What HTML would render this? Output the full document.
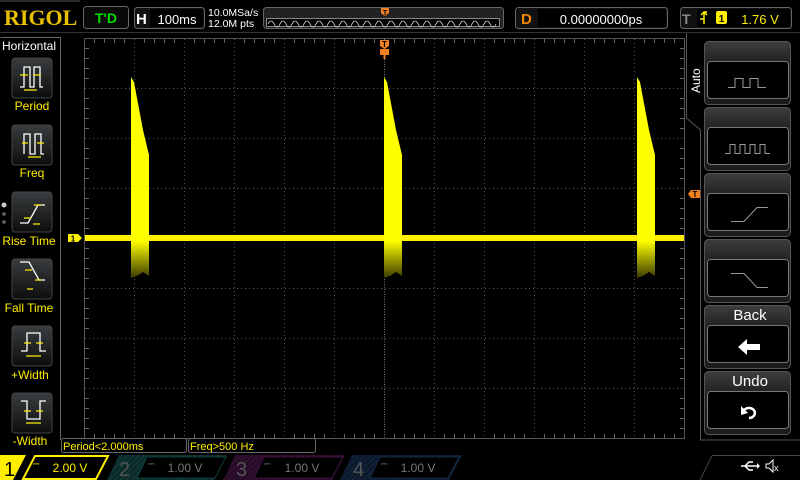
<!DOCTYPE html>
<html><head><style>
html,body{margin:0;padding:0;background:#000;width:800px;height:480px;overflow:hidden;font-family:"Liberation Sans",sans-serif}
svg text{font-family:"Liberation Sans",sans-serif}
</style></head><body>
<svg width="800" height="480" viewBox="0 0 800 480" xmlns="http://www.w3.org/2000/svg">
<defs>
<linearGradient id="btn" x1="0" y1="0" x2="0" y2="1"><stop offset="0" stop-color="#3a3d3f"/><stop offset="1" stop-color="#0c0d0e"/></linearGradient>
<linearGradient id="rb" x1="0" y1="0" x2="0" y2="1"><stop offset="0" stop-color="#3c3e40"/><stop offset="0.3" stop-color="#222425"/><stop offset="1" stop-color="#1a1b1c"/></linearGradient>
<linearGradient id="dn" x1="0" y1="0" x2="0" y2="1"><stop offset="0" stop-color="#ffff00"/><stop offset="1" stop-color="#3a3a00"/></linearGradient>
<pattern id="h2" width="4" height="4" patternUnits="userSpaceOnUse" patternTransform="rotate(45)"><rect width="4" height="4" fill="#0c2a28"/><line x1="0" y1="0" x2="0" y2="4" stroke="#134441" stroke-width="1.5"/></pattern>
<pattern id="h3" width="4" height="4" patternUnits="userSpaceOnUse" patternTransform="rotate(45)"><rect width="4" height="4" fill="#260c26"/><line x1="0" y1="0" x2="0" y2="4" stroke="#3d143d" stroke-width="1.5"/></pattern>
<pattern id="h4" width="4" height="4" patternUnits="userSpaceOnUse" patternTransform="rotate(45)"><rect width="4" height="4" fill="#0c1a2c"/><line x1="0" y1="0" x2="0" y2="4" stroke="#142a46" stroke-width="1.5"/></pattern>
</defs>
<!-- top bar -->
<line x1="0" y1="1" x2="80" y2="1" stroke="#555"/>
<text x="4" y="25" font-family="Liberation Serif" font-weight="bold" font-size="22" fill="#e8c000" style="font-family:'Liberation Serif',serif">RIGOL</text>
<rect x="83.5" y="6.5" width="45" height="22" rx="3" fill="#0a0a0a" stroke="#666"/>
<text x="106" y="23" font-size="14" font-weight="bold" fill="#00e000" text-anchor="middle">T'D</text>
<rect x="134.5" y="7.5" width="70" height="21" rx="3" fill="#111" stroke="#666"/>
<rect x="150" y="9" width="53" height="18" fill="#000"/>
<text x="136" y="24" font-size="15" font-weight="bold" fill="#fff">H</text>
<text x="177" y="24" font-size="13" fill="#fff" text-anchor="middle">100ms</text>
<text x="208" y="16" font-size="10.5" fill="#fff">10.0MSa/s</text>
<text x="208" y="27" font-size="10.5" fill="#fff">12.0M pts</text>
<rect x="263.5" y="7.5" width="240" height="21" rx="3" fill="#222" stroke="#666"/>
<rect x="266.5" y="18.5" width="233" height="8" fill="#000" stroke="#888"/>
<path d="M268 24 q3 -6 6 0 q3 6 6 0 q3 -6 6 0 q3 6 6 0 q3 -6 6 0 q3 6 6 0 q3 -6 6 0 q3 6 6 0 q3 -6 6 0 q3 6 6 0 q3 -6 6 0 q3 6 6 0 q3 -6 6 0 q3 6 6 0 q3 -6 6 0 q3 6 6 0 q3 -6 6 0 q3 6 6 0 q3 -6 6 0 q3 6 6 0 q3 -6 6 0 q3 6 6 0 q3 -6 6 0 q3 6 6 0 q3 -6 6 0 q3 6 6 0 q3 -6 6 0 q3 6 6 0 q3 -6 6 0 q3 6 6 0 q3 -6 6 0 q3 6 6 0 q3 -6 6 0 q3 6 6 0 q3 -6 6 0 q3 6 6 0 q3 -6 6 0 q3 6 6 0" fill="none" stroke="#ddd" stroke-width="0.8"/>
<path d="M381 8 h8 v5 l-4 3 l-4 -3z" fill="#f08020"/>
<text x="385" y="15" font-size="7" fill="#000" text-anchor="middle" font-weight="bold">T</text>
<rect x="515.5" y="7.5" width="152" height="21" rx="3" fill="#111" stroke="#666"/>
<rect x="538" y="9" width="128" height="18" fill="#000"/>
<text x="521" y="24" font-size="15" font-weight="bold" fill="#f08800">D</text>
<text x="601" y="24" font-size="13" fill="#fff" text-anchor="middle">0.00000000ps</text>
<rect x="680.5" y="7.5" width="111" height="21" rx="3" fill="#111" stroke="#666"/>
<rect x="697" y="9" width="93" height="18" fill="#000"/>
<text x="682" y="24" font-size="14" font-weight="bold" fill="#888">T</text>
<path d="M700 19 h4 v-7 h3 M704 19 v5 M701 15 l3 -3 l3 3" fill="none" stroke="#ffee00" stroke-width="1.5"/>
<rect x="716" y="11" width="11" height="13" rx="2" fill="#ffee00"/>
<text x="721.5" y="22" font-size="10" fill="#000" text-anchor="middle" font-weight="bold">1</text>
<text x="760" y="24" font-size="13" fill="#ffee00" text-anchor="middle">1.76 V</text>
<line x1="0" y1="32.5" x2="800" y2="32.5" stroke="#333"/>
<!-- left panel -->
<path d="M0.5 37.5 H60.5 V440" fill="none" stroke="#666"/>
<text x="2" y="50" font-size="12" fill="#fff">Horizontal</text>
<g>
<rect x="12" y="58" width="40" height="40" rx="3" fill="url(#btn)" stroke="#444"/>
<rect x="12" y="125" width="40" height="40" rx="3" fill="url(#btn)" stroke="#444"/>
<rect x="12" y="192" width="40" height="40" rx="3" fill="url(#btn)" stroke="#444"/>
<rect x="12" y="259" width="40" height="40" rx="3" fill="url(#btn)" stroke="#444"/>
<rect x="12" y="326" width="40" height="40" rx="3" fill="url(#btn)" stroke="#444"/>
<rect x="12" y="393" width="40" height="40" rx="3" fill="url(#btn)" stroke="#444"/>
</g>
<g fill="none" stroke-width="1.3">
<path d="M20 87 h4 v-20 h6 v20 h4 v-20 h6 v20 h3" stroke="#fff"/>
<path d="M20 75 h8 M33 75 h8 M24 90 h13" stroke="#ffee00"/>
<path d="M24 154 v-20 h6 v20 h5 v-20 h6 v20 h3" stroke="#fff"/>
<path d="M22 143 h6 M37 143 h7 M28 157 h13" stroke="#ffee00"/>
<path d="M20 223 h8 l10 -18 h7" stroke="#fff"/>
<path d="M34 205 h7 M24 218 h7 M33 224 h7" stroke="#ffee00"/>
<path d="M20 262 h9 l10 18 h6" stroke="#fff"/>
<path d="M25 270 h7 M35 280 h6 M27 289 h6" stroke="#ffee00"/>
<path d="M21 351 h6 v-18 h13 v18 h6" stroke="#fff"/>
<path d="M24 343 h7 M36 343 h7 M26 356 h15" stroke="#ffee00"/>
<path d="M21 401 h6 v18 h13 v-18 h6" stroke="#fff"/>
<path d="M24 411 h7 M36 411 h7 M26 423 h15" stroke="#ffee00"/>
</g>
<text x="32" y="110" font-size="12" fill="#ffee00" text-anchor="middle">Period</text>
<text x="32" y="177" font-size="12" fill="#ffee00" text-anchor="middle">Freq</text>
<text x="29" y="245" font-size="12" fill="#ffee00" text-anchor="middle">Rise Time</text>
<text x="29" y="312" font-size="12" fill="#ffee00" text-anchor="middle">Fall Time</text>
<text x="30" y="379" font-size="12" fill="#ffee00" text-anchor="middle">+Width</text>
<text x="30" y="445" font-size="12" fill="#ffee00" text-anchor="middle">-Width</text>
<circle cx="4" cy="205" r="2.5" fill="#ccc"/><circle cx="4" cy="214" r="1.8" fill="#666"/><circle cx="4" cy="222" r="1.8" fill="#666"/>
<!-- grid -->
<rect x="84.5" y="38.5" width="600" height="400" fill="none" stroke="#555"/>
<g stroke="#555" stroke-dasharray="1,3">
<path d="M134.5 39V438M184.5 39V438M234.5 39V438M284.5 39V438M334.5 39V438M434.5 39V438M484.5 39V438M534.5 39V438M584.5 39V438M634.5 39V438"/>
<path d="M85 88.5H684M85 138.5H684M85 188.5H684M85 288.5H684M85 338.5H684M85 388.5H684"/>
</g>
<g stroke="#777" stroke-dasharray="1,1.5"><path d="M384.5 39V438M85 238.5H684"/></g>
<g stroke="#555">
<path d="M85 42h0" />
</g>
<path id="tk" d="" />
<g stroke="#666" stroke-width="1">
<path d="M94.5 39v4M104.5 39v4M114.5 39v4M124.5 39v4M144.5 39v4M154.5 39v4M164.5 39v4M174.5 39v4M194.5 39v4M204.5 39v4M214.5 39v4M224.5 39v4M244.5 39v4M254.5 39v4M264.5 39v4M274.5 39v4M294.5 39v4M304.5 39v4M314.5 39v4M324.5 39v4M344.5 39v4M354.5 39v4M364.5 39v4M374.5 39v4M394.5 39v4M404.5 39v4M414.5 39v4M424.5 39v4M444.5 39v4M454.5 39v4M464.5 39v4M474.5 39v4M494.5 39v4M504.5 39v4M514.5 39v4M524.5 39v4M544.5 39v4M554.5 39v4M564.5 39v4M574.5 39v4M594.5 39v4M604.5 39v4M614.5 39v4M624.5 39v4M644.5 39v4M654.5 39v4M664.5 39v4M674.5 39v4"/>
<path d="M94.5 438v-4M104.5 438v-4M114.5 438v-4M124.5 438v-4M144.5 438v-4M154.5 438v-4M164.5 438v-4M174.5 438v-4M194.5 438v-4M204.5 438v-4M214.5 438v-4M224.5 438v-4M244.5 438v-4M254.5 438v-4M264.5 438v-4M274.5 438v-4M294.5 438v-4M304.5 438v-4M314.5 438v-4M324.5 438v-4M344.5 438v-4M354.5 438v-4M364.5 438v-4M374.5 438v-4M394.5 438v-4M404.5 438v-4M414.5 438v-4M424.5 438v-4M444.5 438v-4M454.5 438v-4M464.5 438v-4M474.5 438v-4M494.5 438v-4M504.5 438v-4M514.5 438v-4M524.5 438v-4M544.5 438v-4M554.5 438v-4M564.5 438v-4M574.5 438v-4M594.5 438v-4M604.5 438v-4M614.5 438v-4M624.5 438v-4M644.5 438v-4M654.5 438v-4M664.5 438v-4M674.5 438v-4"/>
<path d="M85 48.5h4M85 58.5h4M85 68.5h4M85 78.5h4M85 98.5h4M85 108.5h4M85 118.5h4M85 128.5h4M85 148.5h4M85 158.5h4M85 168.5h4M85 178.5h4M85 198.5h4M85 208.5h4M85 218.5h4M85 228.5h4M85 248.5h4M85 258.5h4M85 268.5h4M85 278.5h4M85 298.5h4M85 308.5h4M85 318.5h4M85 328.5h4M85 348.5h4M85 358.5h4M85 368.5h4M85 378.5h4M85 398.5h4M85 408.5h4M85 418.5h4M85 428.5h4"/>
<path d="M684 48.5h-4M684 58.5h-4M684 68.5h-4M684 78.5h-4M684 98.5h-4M684 108.5h-4M684 118.5h-4M684 128.5h-4M684 148.5h-4M684 158.5h-4M684 168.5h-4M684 178.5h-4M684 198.5h-4M684 208.5h-4M684 218.5h-4M684 228.5h-4M684 248.5h-4M684 258.5h-4M684 268.5h-4M684 278.5h-4M684 298.5h-4M684 308.5h-4M684 318.5h-4M684 328.5h-4M684 348.5h-4M684 358.5h-4M684 368.5h-4M684 378.5h-4M684 398.5h-4M684 408.5h-4M684 418.5h-4M684 428.5h-4"/>
</g>
<!-- waveform -->
<rect x="85" y="235" width="599" height="6" fill="#ffee00"/>
<g id="pulse">
<path d="M131 241 h18 v35 l-6 -4 l-6 4 l-6 2z" fill="url(#dn)"/>
<path d="M131 77 L134 82 L143 130 L149 155 V241 H131z" fill="#ffff00"/>
</g>
<use href="#pulse" x="253"/>
<use href="#pulse" x="506"/>
<path d="M380 40 h9 v6 l-4.5 3 l-4.5 -3z" fill="#f08020"/>
<text x="384.5" y="47" font-size="8" fill="#000" text-anchor="middle" font-weight="bold">T</text>
<path d="M380 49 h9 v6 h-3.5 v4 h-2 v-4 h-3.5z" fill="#f08020"/>
<path d="M68 234 h10 l4 4 l-4 4 h-10z" fill="#ffee00"/>
<text x="73" y="241.5" font-size="8" fill="#000" text-anchor="middle" font-weight="bold">1</text>
<path d="M700 190 h-9 l-3 -4 l3 -4 h9z" fill="#f08020" transform="translate(0,8)"/>
<text x="695" y="197" font-size="8" fill="#000" text-anchor="middle" font-weight="bold">T</text>
<!-- right panel -->
<path d="M686.5 33 V118 L700.5 130 V440 H800" fill="none" stroke="#555"/>
<text x="700" y="93" font-size="12" fill="#fff" transform="rotate(-90 700 93)">Auto</text>
<g stroke="#555">
<rect x="704.5" y="41.5" width="86" height="63" rx="4" fill="url(#rb)"/>
<rect x="704.5" y="107.5" width="86" height="63" rx="4" fill="url(#rb)"/>
<rect x="704.5" y="173.5" width="86" height="63" rx="4" fill="url(#rb)"/>
<rect x="704.5" y="239.5" width="86" height="63" rx="4" fill="url(#rb)"/>
<rect x="704.5" y="305.5" width="86" height="63" rx="4" fill="url(#rb)"/>
<rect x="704.5" y="371.5" width="86" height="63" rx="4" fill="url(#rb)"/>
</g>
<g fill="#000" stroke="#777">
<rect x="707.5" y="61.5" width="81" height="37" rx="3"/>
<rect x="707.5" y="127.5" width="81" height="37" rx="3"/>
<rect x="707.5" y="193.5" width="81" height="37" rx="3"/>
<rect x="707.5" y="259.5" width="81" height="37" rx="3"/>
<rect x="707.5" y="325.5" width="81" height="37" rx="3"/>
<rect x="707.5" y="391.5" width="81" height="37" rx="3"/>
</g>
<g fill="none" stroke="#999">
<path d="M728 87.5 h7 v-9 h8 v9 h7 v-9 h8 v9 h8"/>
<path d="M725 153.5 h5 v-9 h5 v9 h5 v-9 h5 v9 h5 v-9 h5 v9 h5 v-9 h5 v9 h5"/>
<path d="M731 221.5 h13 l13 -14 h11"/>
<path d="M731 273.5 h13 l13 14 h11"/>
</g>
<text x="750" y="320" font-size="15" fill="#fff" text-anchor="middle">Back</text>
<path d="M738 347 l9 -8 v5 h13 v6 h-13 v5z" fill="#fff"/>
<text x="750" y="386" font-size="15" fill="#fff" text-anchor="middle">Undo</text>
<path d="M743 412 a6 5 0 1 1 6 6" fill="none" stroke="#fff" stroke-width="2.5"/>
<path d="M741 406 l0 9 l7 -2z" fill="#fff"/>
<!-- bottom measurement -->
<rect x="61.5" y="438.5" width="125" height="14" rx="2" fill="#000" stroke="#666"/>
<text x="63" y="450" font-size="11" fill="#ffee00">Period&lt;2.000ms</text>
<rect x="188.5" y="438.5" width="127" height="14" rx="2" fill="#000" stroke="#666"/>
<text x="190" y="450" font-size="11" fill="#ffee00">Freq&gt;500 Hz</text>
<!-- channel bar -->
<path d="M0 455 H26 L13 480 H0z" fill="#ffee00"/>
<text x="4" y="476" font-size="20" fill="#000">1</text>
<path d="M35 456 H108 L96 479 H23z" fill="#000" stroke="#ffee00" stroke-width="2"/>
<text x="33" y="466" font-size="8" fill="#ffee00">⎓</text>
<text x="70" y="472" font-size="12" fill="#ffee00" text-anchor="middle">2.00 V</text>
<path d="M119 455 H227 L214 480 H107z" fill="url(#h2)"/>
<path d="M147 457 H226 L215 478 H137z" fill="#000" stroke="#0d3f3c"/>
<text x="119" y="476" font-size="20" fill="#555">2</text>
<text x="148" y="466" font-size="8" fill="#777">⎓</text>
<text x="185" y="472" font-size="12" fill="#777" text-anchor="middle">1.00 V</text>
<path d="M235 455 H345 L332 480 H223z" fill="url(#h3)"/>
<path d="M264 457 H343 L332 478 H254z" fill="#000" stroke="#3d123d"/>
<text x="236" y="476" font-size="20" fill="#555">3</text>
<text x="264" y="466" font-size="8" fill="#777">⎓</text>
<text x="302" y="472" font-size="12" fill="#777" text-anchor="middle">1.00 V</text>
<path d="M352 455 H462 L449 480 H340z" fill="url(#h4)"/>
<path d="M380 457 H459 L448 478 H370z" fill="#000" stroke="#132a45"/>
<text x="353" y="476" font-size="20" fill="#555">4</text>
<text x="381" y="466" font-size="8" fill="#777">⎓</text>
<text x="418" y="472" font-size="12" fill="#777" text-anchor="middle">1.00 V</text>
<path d="M712 455.5 H800 M712 455.5 L700 480" fill="none" stroke="#444"/>
<path d="M741 466 h16 M745 466 l4 -4 h4 M745 466 l4 4 h4" fill="none" stroke="#fff" stroke-width="1.5"/>
<path d="M757 463 l3 3 l-3 3z" fill="#fff"/>
<path d="M766 464 h3 l4 -4 v12 l-4 -4 h-3z" fill="none" stroke="#fff"/>
<text x="774" y="471" font-size="9" fill="#fff">x</text>
</svg>
</body></html>
